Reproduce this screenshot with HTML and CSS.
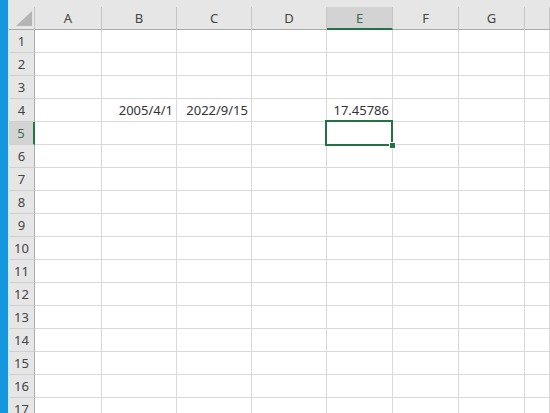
FILE: index.html
```html
<!DOCTYPE html>
<html lang="ja">
<head>
  <meta charset="UTF-8" />
  <title>Book1 - Excel</title>
  <link rel="stylesheet" href="styles.css">
</head>
<body>
  <div class="window">
    <div class="edge"></div>

    <div class="sheet">
      <div class="top_strip"></div>

      <div class="row head_row">
        <div class="corner"><span class="tri"></span></div>
        <div class="col_head">A</div>
        <div class="col_head">B</div>
        <div class="col_head">C</div>
        <div class="col_head">D</div>
        <div class="col_head active">E</div>
        <div class="col_head">F</div>
        <div class="col_head">G</div>
        <div class="col_head"></div>
      </div>

      <div class="row"><div class="row_head">1</div><div class="cell"></div><div class="cell"></div><div class="cell"></div><div class="cell"></div><div class="cell"></div><div class="cell"></div><div class="cell"></div><div class="cell"></div></div>
      <div class="row"><div class="row_head">2</div><div class="cell"></div><div class="cell"></div><div class="cell"></div><div class="cell"></div><div class="cell"></div><div class="cell"></div><div class="cell"></div><div class="cell"></div></div>
      <div class="row"><div class="row_head">3</div><div class="cell"></div><div class="cell"></div><div class="cell"></div><div class="cell"></div><div class="cell"></div><div class="cell"></div><div class="cell"></div><div class="cell"></div></div>
      <div class="row">
        <div class="row_head">4</div>
        <div class="cell"></div>
        <div class="cell num">2005/4/1</div>
        <div class="cell num">2022/9/15</div>
        <div class="cell"></div>
        <div class="cell num">17.45786</div>
        <div class="cell"></div><div class="cell"></div><div class="cell"></div>
      </div>
      <div class="row">
        <div class="row_head active">5</div>
        <div class="cell"></div><div class="cell"></div><div class="cell"></div><div class="cell"></div>
        <div class="cell selected"><span class="sel_box"></span><span class="fill_handle"></span></div>
        <div class="cell"></div><div class="cell"></div><div class="cell"></div>
      </div>
      <div class="row"><div class="row_head">6</div><div class="cell"></div><div class="cell"></div><div class="cell"></div><div class="cell"></div><div class="cell"></div><div class="cell"></div><div class="cell"></div><div class="cell"></div></div>
      <div class="row"><div class="row_head">7</div><div class="cell"></div><div class="cell"></div><div class="cell"></div><div class="cell"></div><div class="cell"></div><div class="cell"></div><div class="cell"></div><div class="cell"></div></div>
      <div class="row"><div class="row_head">8</div><div class="cell"></div><div class="cell"></div><div class="cell"></div><div class="cell"></div><div class="cell"></div><div class="cell"></div><div class="cell"></div><div class="cell"></div></div>
      <div class="row"><div class="row_head">9</div><div class="cell"></div><div class="cell"></div><div class="cell"></div><div class="cell"></div><div class="cell"></div><div class="cell"></div><div class="cell"></div><div class="cell"></div></div>
      <div class="row"><div class="row_head">10</div><div class="cell"></div><div class="cell"></div><div class="cell"></div><div class="cell"></div><div class="cell"></div><div class="cell"></div><div class="cell"></div><div class="cell"></div></div>
      <div class="row"><div class="row_head">11</div><div class="cell"></div><div class="cell"></div><div class="cell"></div><div class="cell"></div><div class="cell"></div><div class="cell"></div><div class="cell"></div><div class="cell"></div></div>
      <div class="row"><div class="row_head">12</div><div class="cell"></div><div class="cell"></div><div class="cell"></div><div class="cell"></div><div class="cell"></div><div class="cell"></div><div class="cell"></div><div class="cell"></div></div>
      <div class="row"><div class="row_head">13</div><div class="cell"></div><div class="cell"></div><div class="cell"></div><div class="cell"></div><div class="cell"></div><div class="cell"></div><div class="cell"></div><div class="cell"></div></div>
      <div class="row"><div class="row_head">14</div><div class="cell"></div><div class="cell"></div><div class="cell"></div><div class="cell"></div><div class="cell"></div><div class="cell"></div><div class="cell"></div><div class="cell"></div></div>
      <div class="row"><div class="row_head">15</div><div class="cell"></div><div class="cell"></div><div class="cell"></div><div class="cell"></div><div class="cell"></div><div class="cell"></div><div class="cell"></div><div class="cell"></div></div>
      <div class="row"><div class="row_head">16</div><div class="cell"></div><div class="cell"></div><div class="cell"></div><div class="cell"></div><div class="cell"></div><div class="cell"></div><div class="cell"></div><div class="cell"></div></div>
      <div class="row"><div class="row_head">17</div><div class="cell"></div><div class="cell"></div><div class="cell"></div><div class="cell"></div><div class="cell"></div><div class="cell"></div><div class="cell"></div><div class="cell"></div></div>
    </div>
  </div>
</body>
</html>
```

FILE: styles.css
```css
html, body {
  margin: 0;
  padding: 0;
  height: 100%;
  overflow: hidden;
  background-color: #ffffff;
  font-family: "Noto Sans", "Noto Sans CJK JP", sans-serif;
  font-size: 13px;
  color: #333333;
}

.window {
  display: flex;
  height: 100%;
}

.edge {
  width: 8px;
  flex-shrink: 0;
  background-color: #1597e0;
  border-right: 1px solid #cfe6f3;
}

.sheet {
  flex: 1;
  display: flex;
  flex-direction: column;
  min-width: 0;
}

.top_strip {
  height: 7px;
  flex-shrink: 0;
  background-color: #e6e6e6;
}

.row {
  display: grid;
  grid-template-columns: 26px 67px 75px 75px 75px 66px 66px 66px 1fr;
  height: 23px;
  flex-shrink: 0;
}

.row > div {
  box-sizing: border-box;
  border-right: 1px solid #d9d9d9;
  border-bottom: 1px solid #d9d9d9;
}

.head_row > div {
  background-color: #e6e6e6;
  border-right-color: #c6c6c6;
  border-bottom-color: #a9a9a9;
}

.corner {
  display: flex;
  align-items: flex-end;
  justify-content: flex-end;
  padding: 0 2px 3px 0;
}

.tri {
  width: 0;
  height: 0;
  border-left: 16px solid transparent;
  border-bottom: 15px solid #b4b4b4;
}

.col_head {
  display: flex;
  align-items: center;
  justify-content: center;
  color: #444444;
}

.col_head.active {
  background-color: #d3d3d3;
  border-bottom: 2px solid #217346;
  color: #3d6b52;
}

.row_head {
  display: flex;
  align-items: center;
  justify-content: center;
  background-color: #e6e6e6;
  color: #444444;
}

.row > .row_head {
  border-right-color: #ababab;
  border-bottom-color: #d0d0d0;
}

.row > .row_head.active {
  background-color: #d3d3d3;
  border-right: 2px solid #217346;
  color: #3d6b52;
}

.cell {
  display: flex;
  align-items: center;
  padding: 0 3px;
  white-space: nowrap;
}

.num {
  justify-content: flex-end;
}

.selected {
  position: relative;
}

.sel_box {
  position: absolute;
  left: -2px;
  top: -2px;
  right: -1px;
  bottom: -2px;
  border: 2px solid #217346;
}

.fill_handle {
  position: absolute;
  right: -4px;
  bottom: -5px;
  width: 5px;
  height: 5px;
  background-color: #217346;
  border: 1px solid #ffffff;
}
```
